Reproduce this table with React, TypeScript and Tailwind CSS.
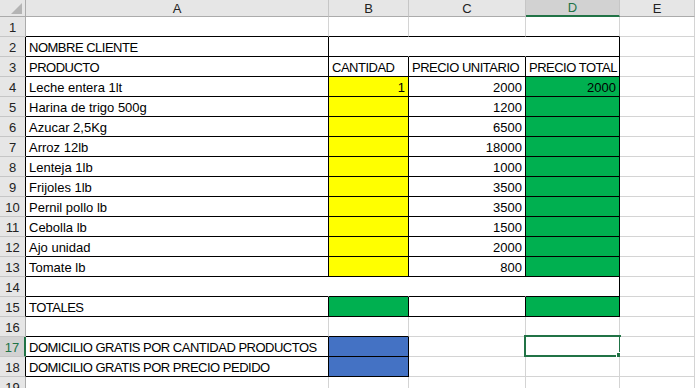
import React from 'react';

type Fill = 'yellow' | 'green' | 'blue';
type Cell = { text?: string; right?: boolean; fill?: Fill };
type Edge = 'black' | 'grid' | 'none';

const FILL: Record<Fill, string> = {
  yellow: 'bg-[#ffff00]',
  green: 'bg-[#00b050]',
  blue: 'bg-[#4472c4]',
};

const RIGHT: Record<Edge, string> = {
  black: 'border-r-black',
  grid: 'border-r-[#d4d4d4]',
  none: 'border-r-transparent',
};

const BOTTOM: Record<Edge, string> = {
  black: 'border-b-black',
  grid: 'border-b-[#d4d4d4]',
  none: 'border-b-transparent',
};

const products: [string, string][] = [
  ['Leche entera 1lt', '2000'],
  ['Harina de trigo 500g', '1200'],
  ['Azucar 2,5Kg', '6500'],
  ['Arroz 12lb', '18000'],
  ['Lenteja 1lb', '1000'],
  ['Frijoles 1lb', '3500'],
  ['Pernil pollo lb', '3500'],
  ['Cebolla lb', '1500'],
  ['Ajo unidad', '2000'],
  ['Tomate lb', '800'],
];

// sheet contents, keyed by row number, columns A..E
const sheet: Record<number, Cell[]> = {
  2: [{ text: 'NOMBRE CLIENTE' }],
  3: [{ text: 'PRODUCTO' }, { text: 'CANTIDAD' }, { text: 'PRECIO UNITARIO' }, { text: 'PRECIO TOTAL' }],
  15: [{ text: 'TOTALES' }, { fill: 'green' }, {}, { fill: 'green' }],
  17: [{ text: 'DOMICILIO GRATIS POR CANTIDAD PRODUCTOS' }, { fill: 'blue' }],
  18: [{ text: 'DOMICILIO GRATIS POR PRECIO PEDIDO' }, { fill: 'blue' }],
};
products.forEach(([name, price], i) => {
  const row = i + 4;
  sheet[row] = [
    { text: name },
    { text: i === 0 ? '1' : undefined, right: true, fill: 'yellow' },
    { text: price, right: true },
    { text: i === 0 ? '2000' : undefined, right: true, fill: 'green' },
  ];
});

// which bordered range a cell belongs to (merged ranges share one id)
function region(r: number, c: number): string | null {
  if (c < 1 || c > 4) return null;
  if (r === 2) return c === 1 ? 'A2' : 'B2:D2';
  if (r === 14) return 'A14:D14';
  if ((r >= 3 && r <= 13) || r === 15) return `${r}-${c}`;
  if ((r === 17 || r === 18) && c <= 2) return `${r}-${c}`;
  return null;
}

function edge(a: string | null, b: string | null): Edge {
  if (a && a === b) return 'none';
  if (a || b) return 'black';
  return 'grid';
}

const isCaps = (t?: string) => !!t && /[A-Z]/.test(t) && t === t.toUpperCase();

const ROWS = Array.from({ length: 19 }, (_, i) => i + 1);
const COLS = ['A', 'B', 'C', 'D', 'E'];

function ColumnHeader({ label }: { label: string }) {
  const active = label === 'D';
  return (
    <div
      className={`flex items-center justify-center border-r border-r-[#c6c6c6] ${
        active ? 'border-b-2 border-b-[#217346] bg-[#d2d2d2] text-[#217346]' : 'border-b border-b-[#ababab] bg-[#e6e6e6] text-[#222]'
      }`}
    >
      {label}
    </div>
  );
}

function RowHeader({ row }: { row: number }) {
  const active = row === 17;
  const boxed = region(row, 1) !== null;
  return (
    <div
      className={`flex items-end justify-center pb-[1px] border-b border-b-[#c6c6c6] ${
        active
          ? 'border-r-2 border-r-[#217346] bg-[#d2d2d2] text-[#217346]'
          : boxed
            ? 'border-r border-r-black bg-[#e6e6e6] text-[#222]'
            : 'border-r border-r-[#ababab] bg-[#e6e6e6] text-[#222]'
      }`}
    >
      {row}
    </div>
  );
}

function SheetCell({ row, col }: { row: number; col: number }) {
  const cell = sheet[row]?.[col - 1] ?? {};
  const r = edge(region(row, col), region(row, col + 1));
  const b = edge(region(row, col), region(row + 1, col));
  const selected = row === 17 && col === 4;
  return (
    <div
      className={`relative flex items-end whitespace-nowrap border-r border-b px-[3px] pb-[1px] text-black ${RIGHT[r]} ${BOTTOM[b]} ${
        cell.fill ? FILL[cell.fill] : 'bg-white'
      } ${cell.right ? 'justify-end' : 'justify-start'} ${isCaps(cell.text) ? 'tracking-[-0.5px]' : ''}`}
    >
      {cell.text}
      {selected && (
        <div className="pointer-events-none absolute -left-[2px] -top-[2px] -right-[2px] -bottom-[1px] border-2 border-[#217346]">
          <div className="absolute -right-[3px] -bottom-[3px] h-[6px] w-[6px] border border-white bg-[#217346]" />
        </div>
      )}
    </div>
  );
}

export default function App() {
  return (
    <div
      className="h-[388px] w-[695px] overflow-hidden bg-white text-[13px] leading-[15px]"
      style={{ fontFamily: '"Liberation Sans", Arial, sans-serif' }}
    >
      <div className="grid grid-cols-[26px_303px_80px_117px_94px_1fr] grid-rows-[17px] auto-rows-[20px]">
        {/* corner */}
        <div className="relative border-r border-b border-r-[#ababab] border-b-[#ababab] bg-[#e6e6e6]">
          <svg className="absolute left-0 top-0" width="25" height="16" viewBox="0 0 25 16">
            <polygon points="22,3 22,14 11,14" fill="#b4b4b4" />
          </svg>
        </div>
        {COLS.map((c) => (
          <ColumnHeader key={c} label={c} />
        ))}

        {ROWS.map((row) => (
          <React.Fragment key={row}>
            <RowHeader row={row} />
            {COLS.map((_, i) => (
              <SheetCell key={i} row={row} col={i + 1} />
            ))}
          </React.Fragment>
        ))}
      </div>
    </div>
  );
}
